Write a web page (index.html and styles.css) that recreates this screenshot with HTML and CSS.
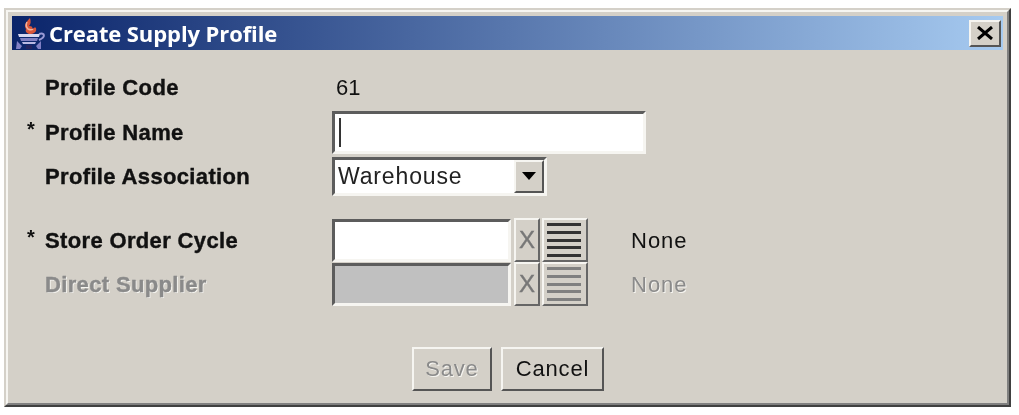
FILE: index.html
```html
<!DOCTYPE html>
<html lang="en">
<head>
<meta charset="utf-8">
<title>Create Supply Profile</title>
<link rel="stylesheet" href="styles.css">
</head>
<body>
<div class="window">
  <div class="frame">
    <div class="titlebar">
      <svg class="app-icon" width="30" height="32" viewBox="0 0 30 32">
        <path d="M14 1c-5 5-6 8-4 11-1 2 0 4 3 5 5 0 8-2 7-6-1-1-2 0-4 1 1-2 0-3-3-3 2-2 2-5 1-8z" fill="#d9563a"/>
        <path d="M11 5c-1 2-1 5 1 7 2 1 4 1 5 0" fill="none" stroke="#f2b39c" stroke-width="1.5"/>
        <path d="M2 17h22l-1 3H3z" fill="#d6d6f0"/>
        <path d="M4 21h18l-1 3H5z" fill="#7e7ec0"/>
        <path d="M6 25h14l-1 2H7z" fill="#b9b9e2"/>
        <path d="M1 24l5 5-2 3H0zM25 24l-5 5 2 3h3z" fill="#8080c4"/>
        <path d="M10 28h6v4h-6z" fill="#23245f"/>
        <path d="M23 17c6-2 7 3 0 6" fill="none" stroke="#9a9ad6" stroke-width="2"/>
      </svg>
      <span class="title-text">Create Supply Profile</span>
      <div class="close-btn">
        <svg width="18" height="14" viewBox="0 0 18 14"><path d="M2 1l14 12M16 1L2 13" stroke="#000" stroke-width="3"/></svg>
      </div>
    </div>
    <div class="form">
      <div class="row row-code">
        <span class="star"></span><span class="label">Profile Code</span>
        <span class="value value-code">61</span>
      </div>
      <div class="row row-name">
        <span class="star">*</span><span class="label">Profile Name</span>
        <div class="field field-name"><span class="caret"></span></div>
      </div>
      <div class="row row-assoc">
        <span class="star"></span><span class="label">Profile Association</span>
        <div class="field field-combo">
          <span class="combo-text">Warehouse</span>
          <div class="combo-btn"><span class="arrow"></span></div>
        </div>
      </div>
      <div class="row row-cycle">
        <span class="star">*</span><span class="label">Store Order Cycle</span>
        <div class="field field-lookup"></div>
        <div class="tool-btn clear-btn">X</div>
        <div class="tool-btn list-btn"><span class="line"></span><span class="line"></span><span class="line"></span><span class="line"></span><span class="line"></span></div>
        <span class="value value-none">None</span>
      </div>
      <div class="row row-supplier is-disabled">
        <span class="star"></span><span class="label">Direct Supplier</span>
        <div class="field field-lookup"></div>
        <div class="tool-btn clear-btn">X</div>
        <div class="tool-btn list-btn"><span class="line"></span><span class="line"></span><span class="line"></span><span class="line"></span><span class="line"></span></div>
        <span class="value value-none">None</span>
      </div>
      <div class="actions">
        <div class="btn btn-save">Save</div>
        <div class="btn btn-cancel">Cancel</div>
      </div>
    </div>
  </div>
</div>
</body>
</html>
```
FILE: styles.css
```css
* { box-sizing: border-box; }
html, body { margin: 0; padding: 0; background: #fff; }
body { width: 1019px; height: 415px; overflow: hidden; font-family: "Liberation Sans", Arial, sans-serif; color: #111; }
.window {
  width: 1007px; height: 399px; margin: 8px 0 0 4px;
  border: 2px solid; border-color: #d4d0c8 #404040 #404040 #d4d0c8;
  filter: blur(0.5px);
}
.frame {
  height: 100%; padding: 4px;
  background: #d4d0c8;
  border: 2px solid; border-color: #f6f5f1 #808080 #808080 #f6f5f1;
  display: flex; flex-direction: column;
}
.titlebar {
  height: 34px; flex: none; display: flex; align-items: center; padding: 0 2px 0 2px;
  background: linear-gradient(90deg, #0a246a 0%, #a6caf0 100%);
}
.app-icon { flex: none; margin-left: 2px; width: 30px; height: 32px; }
.title-text { margin-left: 3px; color: #fff; font: bold 22px "Open Sans", "Liberation Sans", sans-serif; letter-spacing: -0.1px; }
.close-btn {
  margin-left: auto; width: 32px; height: 27px; display: flex; align-items: center; justify-content: center;
  background: #d4d0c8; border: 2px solid; border-color: #f6f5f1 #555 #555 #f6f5f1;
}
.form { flex: 1; display: flex; flex-direction: column; padding: 16px 0 0 15px; }
.row { display: flex; align-items: center; flex: none; }
.row-code { height: 43px; }
.row-name { height: 46px; }
.row-assoc { height: 42px; margin-bottom: 21px; }
.row-cycle { height: 44px; }
.row-supplier { height: 44px; }
.star { width: 18px; height: 32px; font-size: 20px; font-weight: bold; line-height: 26px; flex: none; }
.label { width: 287px; padding-top: 1px; flex: none; font-size: 22px; font-weight: bold; letter-spacing: 0.35px; -webkit-text-stroke: 0.4px currentColor; }
.value { font-size: 22px; padding-top: 1px; }
.value-code { padding-left: 4px; }
.field {
  height: 100%; background: #fff; flex: none;
  border: 3px solid; border-color: #5c5c5c #f6f5f1 #f6f5f1 #5c5c5c;
  display: flex; align-items: center;
}
.field-name { width: 314px; height: 43px; padding-left: 4px; }
.caret { width: 2px; height: 29px; background: #333; }
.field-combo { width: 215px; height: 39px; padding-left: 3px; position: relative; }
.combo-text { font-size: 23px; padding-top: 1px; letter-spacing: 0.85px; color: #222; }
.combo-btn {
  margin-left: auto; width: 30px; height: 100%;
  background: #d4d0c8; border: 2px solid; border-color: #f6f5f1 #555 #555 #f6f5f1;
  display: flex; align-items: center; justify-content: center;
}
.arrow { width: 0; height: 0; border: 7px solid transparent; border-top: 8px solid #000; border-bottom: 0; }
.field-lookup { width: 179px; height: 43px; }
.tool-btn {
  height: 44px; flex: none; background: #d4d0c8;
  border: 2px solid; border-color: #f6f5f1 #666 #666 #f6f5f1;
}
.clear-btn {
  width: 26px; margin-left: 3px; display: flex; align-items: center; justify-content: center;
  color: #777; font-size: 24px; -webkit-text-stroke: 0.4px currentColor;
}
.list-btn {
  width: 46px; margin-left: 2px; padding: 3px 5px 3px 3px;
  display: flex; flex-direction: column; justify-content: space-between;
}
.line { height: 3px; background: #333; }
.value-none { margin-left: 43px; letter-spacing: 1px; }
.is-disabled .label, .is-disabled .value-none { color: #8a8a8a; text-shadow: 1px 1px 0 #f6f5f1; }
.is-disabled .field { background: #c0c0c0; }
.is-disabled .line { background: #808080; }
.actions { display: flex; margin-top: 41px; padding-left: 385px; gap: 9px; }
.btn {
  height: 44px; display: flex; align-items: center; justify-content: center; font-size: 22px; letter-spacing: 0.8px;
  background: #d4d0c8; border: 2px solid; border-color: #f6f5f1 #555 #555 #f6f5f1;
}
.btn-save { width: 80px; color: #8a8a8a; text-shadow: 1px 1px 0 #f6f5f1; }
.btn-cancel { width: 103px; }
```
